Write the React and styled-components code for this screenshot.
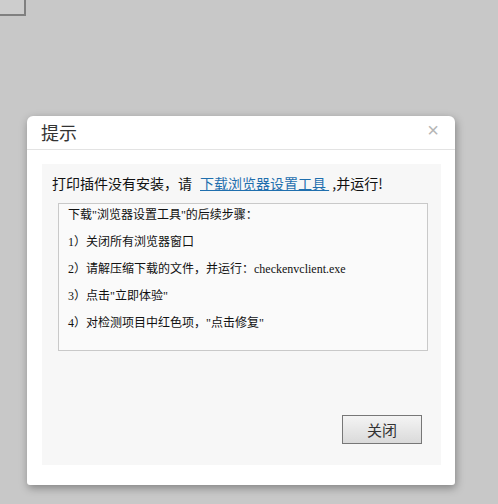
import styled, { createGlobalStyle } from "styled-components";

const GlobalStyle = createGlobalStyle`
  html, body {
    margin: 0;
    padding: 0;
    background: #c8c8c8;
    font-family: "Noto Sans CJK SC", "Liberation Sans", sans-serif;
  }
`;

const Page = styled.div`
  width: 498px;
  height: 504px;
  overflow: hidden;
`;

const Placeholder = styled.div`
  box-sizing: border-box;
  width: 26px;
  height: 16px;
  background: #cdcdcd;
  border-right: 2px solid #808080;
  border-bottom: 2px solid #808080;
`;

const Dialog = styled.div`
  width: 428px;
  margin: 100px 0 0 27px;
  background: #fff;
  border-radius: 6px 6px 3px 3px;
  box-shadow: 1px 3px 8px rgba(0, 0, 0, 0.35);
`;

const Header = styled.div`
  display: flex;
  align-items: center;
  justify-content: space-between;
  height: 33px;
  padding: 0 16px 0 14px;
  border-bottom: 1px solid #e3e3e3;
`;

const Title = styled.h3`
  margin: 0;
  font-size: 18px;
  font-weight: normal;
  color: #333;
  line-height: 33px;
`;

const Close = styled.span`
  font-family: "Liberation Sans", sans-serif;
  font-size: 20px;
  line-height: 20px;
  color: #b5b5b5;
  margin-top: -6px;
  cursor: pointer;
`;

const Body = styled.div`
  padding: 14px 14px 20px 15px;
`;

const Panel = styled.div`
  display: flex;
  flex-direction: column;
  box-sizing: border-box;
  height: 301px;
  padding: 9px 13px 0 10px;
  background: #f7f7f7;
`;

const Notice = styled.p`
  margin: 0;
  font-size: 14px;
  line-height: 20px;
  color: #111;
  white-space: nowrap;
`;

const Link = styled.a`
  margin-left: 8px;
  color: #1f6fae;
  text-decoration: underline;
  cursor: pointer;
`;

const Steps = styled.div`
  margin: 10px 0 0 6px;
  padding: 3px 9px 18px;
  background: #fafafa;
  border: 1px solid #c9c9c9;
  font-family: "Liberation Serif", "Noto Sans CJK SC", serif;
  font-size: 12px;
  color: #111;
`;

const Step = styled.div`
  line-height: 17px;
  white-space: nowrap;
  & + & {
    margin-top: 10px;
  }
`;

const Footer = styled.div`
  display: flex;
  justify-content: flex-end;
  margin-top: auto;
  padding: 0 6px 21px 0;
`;

const Button = styled.button`
  width: 80px;
  height: 29px;
  border: 1px solid #777;
  background: linear-gradient(#f4f4f4, #dadada);
  font-family: "Noto Sans CJK SC", sans-serif;
  font-size: 15px;
  color: #333;
  padding: 0;
  cursor: pointer;
`;

const steps = [
  '下载"浏览器设置工具"的后续步骤：',
  "1）关闭所有浏览器窗口",
  "2）请解压缩下载的文件，并运行：checkenvclient.exe",
  '3）点击"立即体验"',
  '4）对检测项目中红色项，"点击修复"',
];

export default function App() {
  return (
    <Page>
      <GlobalStyle />
      <Placeholder />
      <Dialog>
        <Header>
          <Title>提示</Title>
          <Close>×</Close>
        </Header>
        <Body>
          <Panel>
            <Notice>
              打印插件没有安装，请<Link>下载浏览器设置工具&nbsp;</Link>&nbsp;,并运行!
            </Notice>
            <Steps>
              {steps.map((s) => (
                <Step key={s}>{s}</Step>
              ))}
            </Steps>
            <Footer>
              <Button>关闭</Button>
            </Footer>
          </Panel>
        </Body>
      </Dialog>
    </Page>
  );
}
